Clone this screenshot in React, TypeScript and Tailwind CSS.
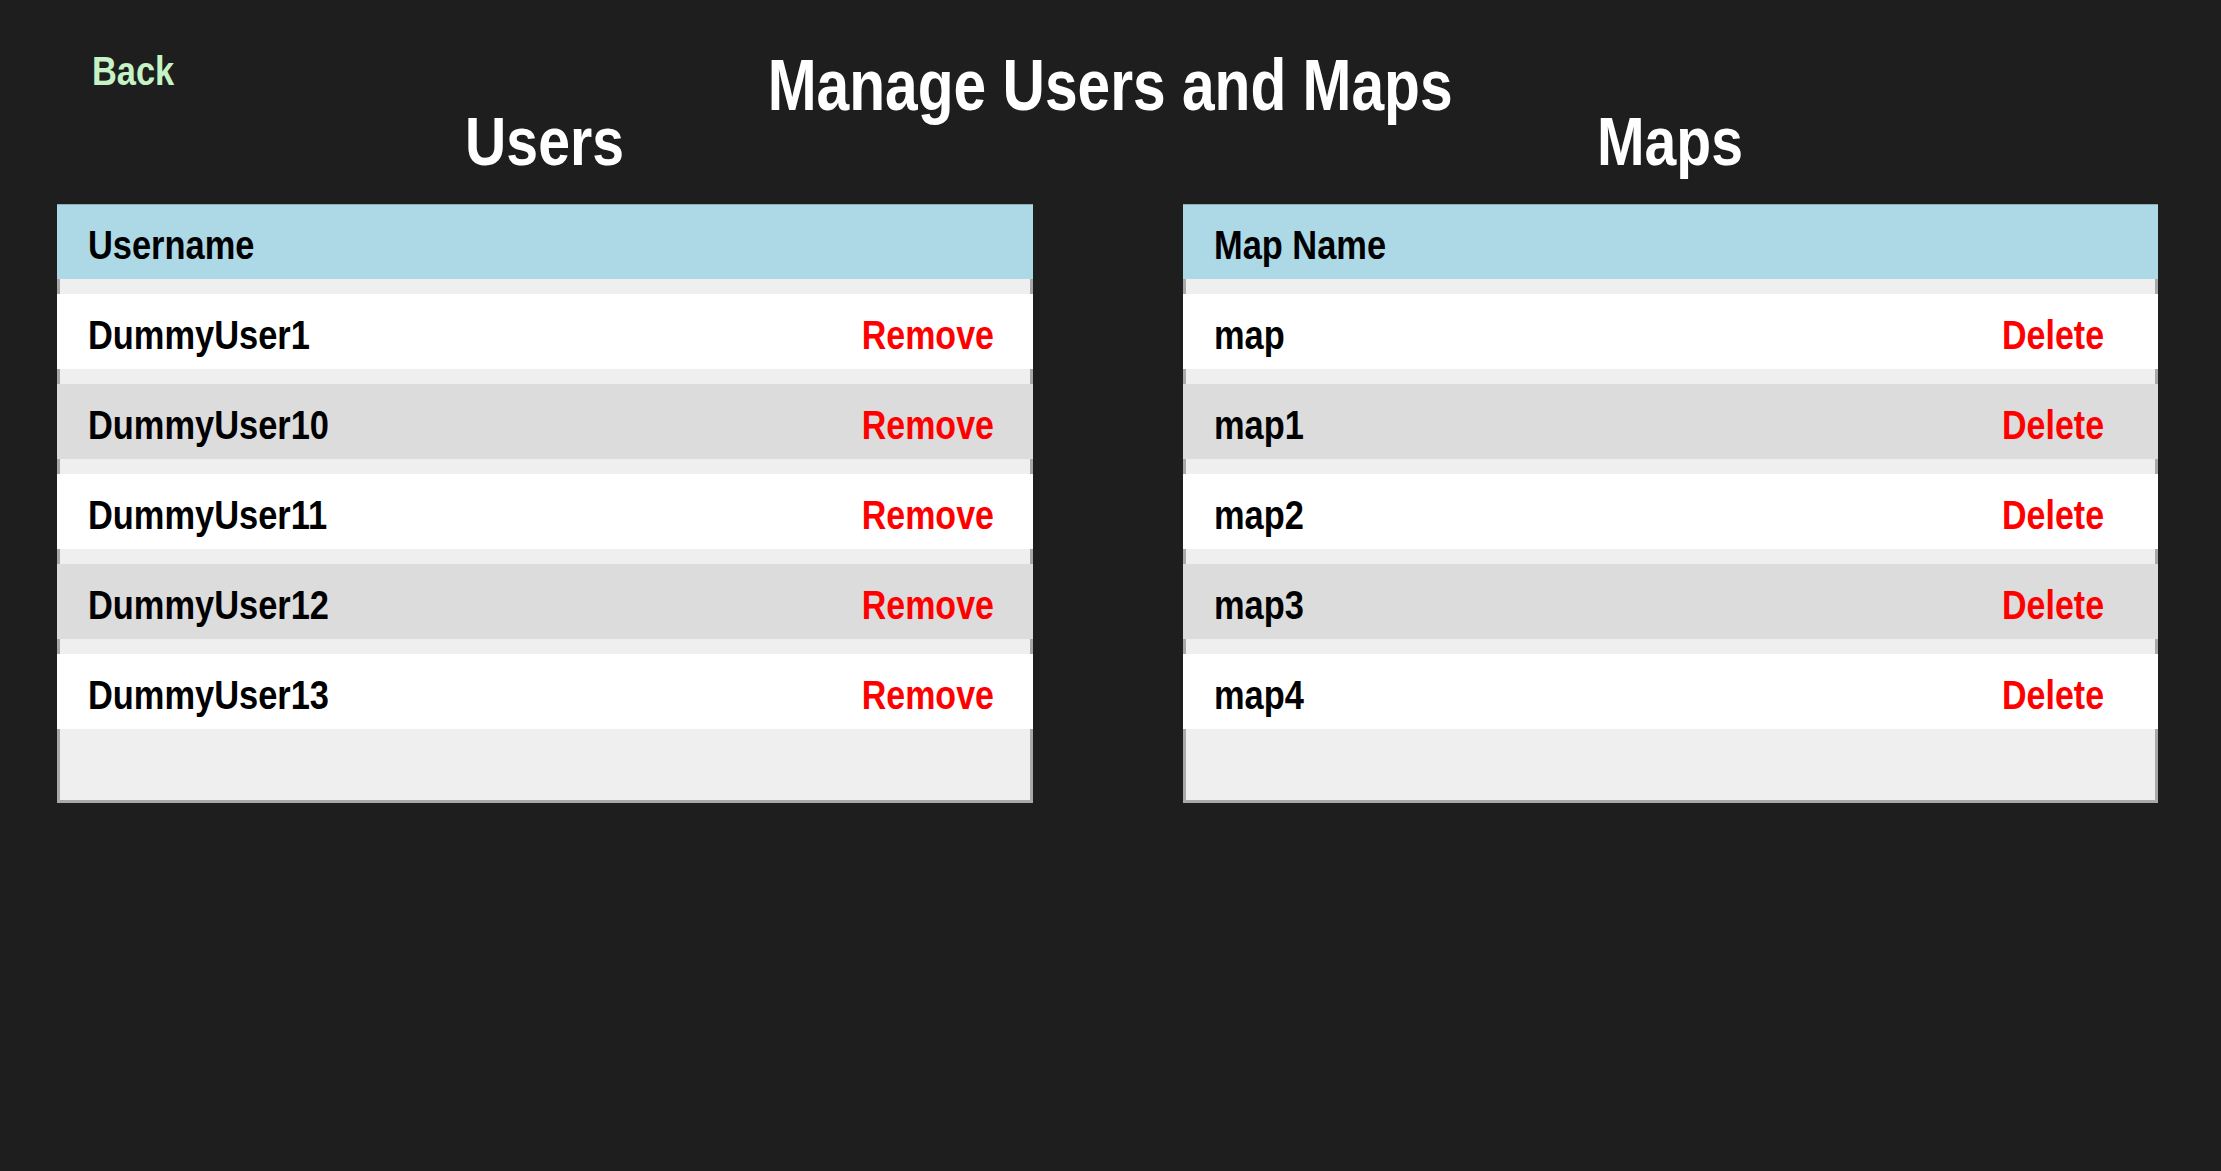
import React from "react";

const users = ["DummyUser1", "DummyUser10", "DummyUser11", "DummyUser12", "DummyUser13"];
const maps = ["map", "map1", "map2", "map3", "map4"];

function Table({ header, rows, action }: { header: string; rows: string[]; action: string }) {
  return (
    <div className="flex flex-col bg-[#efefef] border-x-[3px] border-b-[3px] border-[#a9a9a9] pb-[71px]">
      <div className="-mx-[3px] h-[75px] bg-[#add8e6] border-t border-[#86aebb] flex items-center pl-[31px] pt-[6px] text-[40px] leading-[40px] text-black">
        <span className="inline-block origin-left scale-x-[0.86]">{header}</span>
      </div>
      <div className="flex flex-col gap-[15px] pt-[15px]">
        {rows.map((r, i) => (
          <div
            key={r}
            className={`-mx-[3px] h-[75px] flex items-center pt-[6px] text-[40px] leading-[40px] ${i % 2 === 0 ? "bg-white" : "bg-[#dcdcdc]"}`}
          >
            <div className="flex-1 pl-[31px] text-black">
              <span className="inline-block origin-left scale-x-[0.86]">{r}</span>
            </div>
            <div className="w-[210px] text-center text-[#ff0000]">
              <span className="inline-block origin-center scale-x-[0.85]">{action}</span>
            </div>
          </div>
        ))}
      </div>
    </div>
  );
}

export default function App() {
  return (
    <div
      className="min-h-[1171px] w-full bg-[#1e1e1e] font-bold"
      style={{ fontFamily: '"Liberation Sans", Arial, sans-serif' }}
    >
      <div className="grid grid-cols-[1fr_auto_1fr] pt-[51px]">
        <div className="pl-[92px]">
          <span className="inline-block origin-left scale-x-[0.86] text-[40px] leading-[40px] text-[#c6f3c6]">Back</span>
        </div>
        <h1 className="mt-[6px] text-[72px] leading-[56px] text-white">
          <span className="inline-block origin-center scale-x-[0.815]">Manage Users and Maps</span>
        </h1>
        <div />
      </div>
      <div className="flex gap-[150px] pl-[57px] pr-[63px]">
        <div className="flex-1 flex flex-col">
          <h2 className="text-center text-[68px] leading-[56px] text-white">
            <span className="inline-block origin-center scale-x-[0.84]">Users</span>
          </h2>
          <div className="mt-[35px]">
            <Table header="Username" rows={users} action="Remove" />
          </div>
        </div>
        <div className="flex-1 flex flex-col">
          <h2 className="text-center text-[68px] leading-[56px] text-white">
            <span className="inline-block origin-center scale-x-[0.84]">Maps</span>
          </h2>
          <div className="mt-[35px]">
            <Table header="Map Name" rows={maps} action="Delete" />
          </div>
        </div>
      </div>
    </div>
  );
}
